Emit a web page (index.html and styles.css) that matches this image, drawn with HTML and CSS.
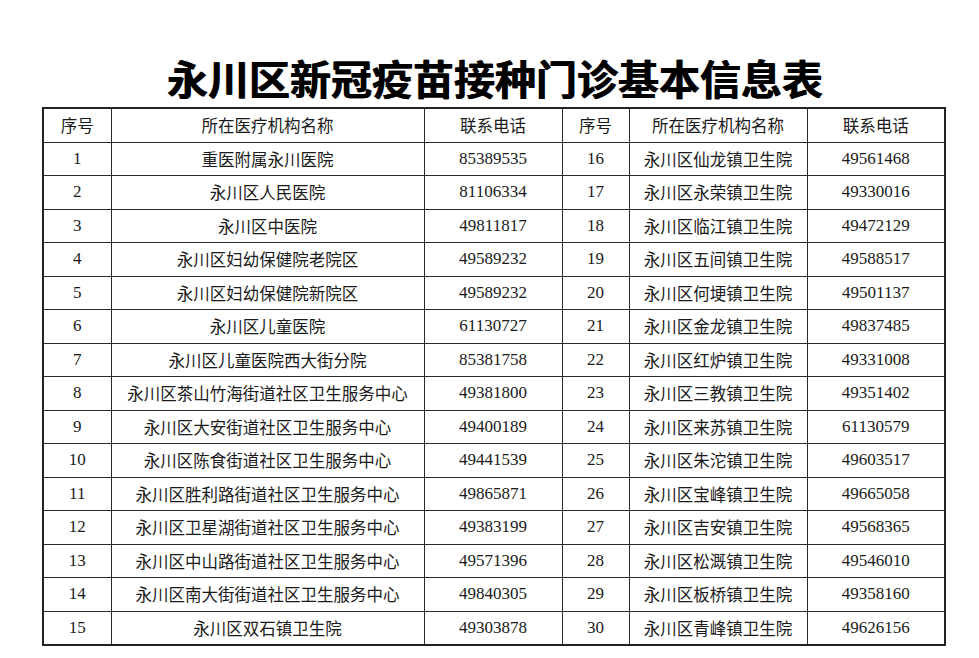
FILE: index.html
```html
<!DOCTYPE html>
<html lang="zh-CN">
<head>
<meta charset="utf-8">
<link rel="stylesheet" href="styles.css">
</head>
<body>
<div class="page">
  <h1 class="title">永川区新冠疫苗接种门诊基本信息表</h1>
  <table class="info">
    <colgroup>
      <col class="c1"><col class="c2"><col class="c3"><col class="c4"><col class="c5"><col class="c6">
    </colgroup>
    <thead>
      <tr><th>序号</th><th>所在医疗机构名称</th><th>联系电话</th><th>序号</th><th>所在医疗机构名称</th><th>联系电话</th></tr>
    </thead>
    <tbody>
      <tr><td>1</td><td>重医附属永川医院</td><td>85389535</td><td>16</td><td>永川区仙龙镇卫生院</td><td>49561468</td></tr>
      <tr><td>2</td><td>永川区人民医院</td><td>81106334</td><td>17</td><td>永川区永荣镇卫生院</td><td>49330016</td></tr>
      <tr><td>3</td><td>永川区中医院</td><td>49811817</td><td>18</td><td>永川区临江镇卫生院</td><td>49472129</td></tr>
      <tr><td>4</td><td>永川区妇幼保健院老院区</td><td>49589232</td><td>19</td><td>永川区五间镇卫生院</td><td>49588517</td></tr>
      <tr><td>5</td><td>永川区妇幼保健院新院区</td><td>49589232</td><td>20</td><td>永川区何埂镇卫生院</td><td>49501137</td></tr>
      <tr><td>6</td><td>永川区儿童医院</td><td>61130727</td><td>21</td><td>永川区金龙镇卫生院</td><td>49837485</td></tr>
      <tr><td>7</td><td>永川区儿童医院西大街分院</td><td>85381758</td><td>22</td><td>永川区红炉镇卫生院</td><td>49331008</td></tr>
      <tr><td>8</td><td>永川区茶山竹海街道社区卫生服务中心</td><td>49381800</td><td>23</td><td>永川区三教镇卫生院</td><td>49351402</td></tr>
      <tr><td>9</td><td>永川区大安街道社区卫生服务中心</td><td>49400189</td><td>24</td><td>永川区来苏镇卫生院</td><td>61130579</td></tr>
      <tr><td>10</td><td>永川区陈食街道社区卫生服务中心</td><td>49441539</td><td>25</td><td>永川区朱沱镇卫生院</td><td>49603517</td></tr>
      <tr><td>11</td><td>永川区胜利路街道社区卫生服务中心</td><td>49865871</td><td>26</td><td>永川区宝峰镇卫生院</td><td>49665058</td></tr>
      <tr><td>12</td><td>永川区卫星湖街道社区卫生服务中心</td><td>49383199</td><td>27</td><td>永川区吉安镇卫生院</td><td>49568365</td></tr>
      <tr><td>13</td><td>永川区中山路街道社区卫生服务中心</td><td>49571396</td><td>28</td><td>永川区松溉镇卫生院</td><td>49546010</td></tr>
      <tr><td>14</td><td>永川区南大街街道社区卫生服务中心</td><td>49840305</td><td>29</td><td>永川区板桥镇卫生院</td><td>49358160</td></tr>
      <tr><td>15</td><td>永川区双石镇卫生院</td><td>49303878</td><td>30</td><td>永川区青峰镇卫生院</td><td>49626156</td></tr>
    </tbody>
  </table>
</div>
</body>
</html>
```

FILE: styles.css
```css
html, body {
  margin: 0;
  padding: 0;
  background: #ffffff;
}
.page {
  width: 979px;
  height: 658px;
  overflow: hidden;
  font-family: "Liberation Serif", "Noto Sans CJK SC", serif;
  color: #111;
}
.title {
  margin: 55px 0 0 0;
  height: 52px;
  line-height: 44px;
  font-size: 41px;
  font-weight: 700;
  text-align: center;
  letter-spacing: 0;
  padding-left: 10px;
  font-family: "Noto Sans CJK SC", serif;
  color: #000;
  text-shadow: 1px 0 0 #000;
}
.info {
  margin-left: 42px;
  width: 902px;
  border-collapse: collapse;
  table-layout: fixed;
  border: 2px solid #222;
}
.c1 { width: 68px; }
.c2 { width: 313px; }
.c3 { width: 138px; }
.c4 { width: 67px; }
.c5 { width: 178px; }
.c6 { width: 138px; }
.info th, .info td {
  border: 1px solid #2a2a2a;
  height: 32.5px;
  padding: 0;
  text-align: center;
  vertical-align: middle;
  font-size: 16.5px;
  font-weight: 400;
  color: #1a1a1a;
  white-space: nowrap;
}
.info td:nth-child(3n+1),
.info td:nth-child(3n) {
  font-size: 17px;
}
```
